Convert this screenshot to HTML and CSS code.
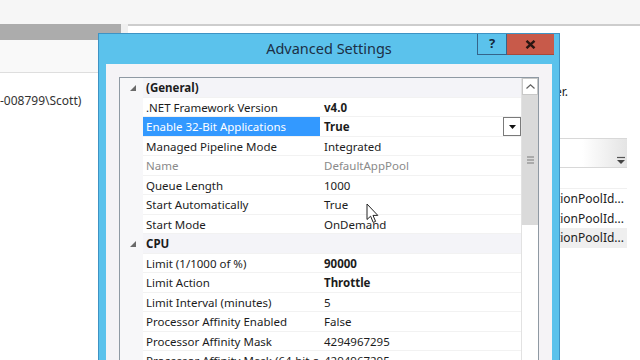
FILE: index.html
```html
<!DOCTYPE html>
<html>
  <head>
    <meta charset="UTF-8" />
    <title>Advanced Settings</title>
    <link rel="stylesheet" href="styles.css">
  </head>
  <body>
    <div class="desktop">
      <div class="topbar"></div>
      <div class="workspace">
        <div class="left-pane">
          <div class="pane-header"></div>
          <div class="pane-toolbar"></div>
          <div class="pane-body">-008799\Scott)</div>
        </div>
        <div class="right-pane">
          <p class="pane-hint">user.</p>
          <div class="pool-list">
            <div class="list-header">
              <span class="header-sort">
                <svg width="8" height="9" viewBox="0 0 8 9"><path d="M0 1.5h8" stroke="#555" stroke-width="1.2"/><path d="M0 4h8L4 8z" fill="#444"/></svg>
              </span>
            </div>
            <div class="list-body">
              <div class="list-row">ApplicationPoolId...</div>
              <div class="list-row">ApplicationPoolId...</div>
              <div class="list-row list-row-active">ApplicationPoolId...</div>
            </div>
          </div>
        </div>
      </div>
    </div>

    <!-- 对话框窗口 -->
    <div class="dialog">
      <div class="titlebar">
        <div class="title">Advanced Settings</div>
        <div class="caption-buttons">
          <div class="btn-help">?</div>
          <div class="btn-close">
            <svg width="11" height="9" viewBox="0 0 11 9"><path d="M1.5 0.8L9.5 8.2M9.5 0.8L1.5 8.2" stroke="#2a1612" stroke-width="2.4"/></svg>
          </div>
        </div>
      </div>
      <div class="dialog-body">
        <div class="grid">
          <div class="rows">
            <div class="row category">
              <span class="gutter"><svg width="6" height="6" viewBox="0 0 6 6"><path d="M6 0V6H0z" fill="#6a6a6a"/></svg></span>
              <span class="name">(General)</span><span class="value"></span>
            </div>
            <div class="row"><span class="gutter"></span><span class="name">.NET Framework Version</span><span class="value bold">v4.0</span></div>
            <div class="row selected">
              <span class="gutter"></span><span class="name">Enable 32-Bit Applications</span>
              <span class="value bold">True
                <span class="dropdown"><svg width="7" height="4" viewBox="0 0 7 4"><path d="M0 0H7L3.5 4z" fill="#111"/></svg></span>
              </span>
            </div>
            <div class="row"><span class="gutter"></span><span class="name">Managed Pipeline Mode</span><span class="value">Integrated</span></div>
            <div class="row readonly"><span class="gutter"></span><span class="name">Name</span><span class="value">DefaultAppPool</span></div>
            <div class="row"><span class="gutter"></span><span class="name">Queue Length</span><span class="value">1000</span></div>
            <div class="row"><span class="gutter"></span><span class="name">Start Automatically</span><span class="value">True</span></div>
            <div class="row"><span class="gutter"></span><span class="name">Start Mode</span><span class="value">OnDemand</span></div>
            <div class="row category">
              <span class="gutter"><svg width="6" height="6" viewBox="0 0 6 6"><path d="M6 0V6H0z" fill="#6a6a6a"/></svg></span>
              <span class="name">CPU</span><span class="value"></span>
            </div>
            <div class="row"><span class="gutter"></span><span class="name">Limit (1/1000 of %)</span><span class="value bold">90000</span></div>
            <div class="row"><span class="gutter"></span><span class="name">Limit Action</span><span class="value bold">Throttle</span></div>
            <div class="row"><span class="gutter"></span><span class="name">Limit Interval (minutes)</span><span class="value">5</span></div>
            <div class="row"><span class="gutter"></span><span class="name">Processor Affinity Enabled</span><span class="value">False</span></div>
            <div class="row"><span class="gutter"></span><span class="name">Processor Affinity Mask</span><span class="value">4294967295</span></div>
            <div class="row"><span class="gutter"></span><span class="name">Processor Affinity Mask (64-bit o</span><span class="value">4294967295</span></div>
          </div>
          <div class="scrollbar">
            <div class="scroll-up"><svg width="9" height="5" viewBox="0 0 9 5"><path d="M0.5 4.5L4.5 0.8L8.5 4.5" fill="none" stroke="#606060" stroke-width="1.2"/></svg></div>
            <div class="scroll-thumb"><svg width="7" height="8" viewBox="0 0 7 8"><path d="M0 1h7M0 4h7M0 7h7" stroke="#7a7a7a" stroke-width="1.2"/></svg></div>
            <div class="scroll-track"></div>
          </div>
        </div>
      </div>
    </div>

    <svg class="cursor" width="13" height="21" viewBox="0 0 13 21"><path d="M1 1V16.5L4.6 13.2L7.2 19.4L9.6 18.4L7 12.4H11.8Z" fill="#fff" stroke="#222" stroke-width="1"/></svg>
  </body>
</html>
```

FILE: styles.css
```css
body {
  margin: 0;
  width: 640px;
  height: 360px;
  overflow: hidden;
  position: relative;
  font-family: "Noto Sans", "Open Sans", sans-serif;
  font-size: 11.5px;
  color: #1c1c1c;
  background-color: #ffffff;
}
.desktop {
  display: flex;
  flex-direction: column;
  height: 360px;
}
.topbar {
  height: 24px;
  background-color: #f6f6f6;
}
.workspace {
  flex: 1;
  display: flex;
  gap: 7px;
  background-color: #f0f0f0;
}
.left-pane {
  width: 121px;
  display: flex;
  flex-direction: column;
  background-color: #ffffff;
}
.pane-header {
  height: 16px;
  background-color: #acacac;
}
.pane-toolbar {
  height: 32px;
  background-color: #f9f9f9;
  border-bottom: 1px solid #dedede;
}
.pane-body {
  flex: 1;
  padding-top: 20px;
  line-height: 16px;
  font-size: 12px;
  color: #333333;
  white-space: nowrap;
}
.right-pane {
  flex: 1;
  background-color: #ffffff;
  border-top: 2px solid #cdcdcd;
}
.pane-hint {
  margin: 58px 0 0;
  width: 440px;
  line-height: 16px;
  font-size: 12px;
  text-align: right;
  white-space: nowrap;
  color: #222222;
}
.pool-list {
  width: 300px;
  margin: 38px 0 0 199px;
}
.list-header {
  height: 28px;
  border: 1px solid #d8d8d8;
  border-right: none;
  background: linear-gradient(to right, #ffffff 85%, #e4e4e4);
  display: flex;
  justify-content: flex-end;
  align-items: flex-end;
}
.header-sort {
  display: flex;
  padding: 0 2px 2px 0;
}
.list-body {
  margin-top: 20px;
  border-top: 1px solid #f0f0f0;
}
.list-row {
  height: 19.5px;
  line-height: 19.5px;
  font-size: 12px;
  text-align: right;
  padding-right: 3px;
  color: #222222;
}
.list-row-active {
  background-color: #efefef;
}

/* 对话框 */
.dialog {
  position: absolute;
  left: 98px;
  top: 33px;
  width: 462px;
  height: 340px;
  box-sizing: border-box;
  border: 1px solid #3e93c4;
  background-color: #5bc2ec;
  padding: 0 7px;
  display: flex;
  flex-direction: column;
}
.titlebar {
  height: 30px;
  margin: 0 -7px;
  padding-right: 5px;
  display: flex;
  align-items: flex-start;
}
.title {
  flex: 1;
  padding-left: 82px;
  text-align: center;
  line-height: 29px;
  font-size: 14.5px;
  color: #1b2f45;
}
.caption-buttons {
  display: flex;
}
.btn-help {
  width: 30px;
  height: 21px;
  box-sizing: border-box;
  border: 1px solid #35648a;
  border-top: none;
  text-align: center;
  font-weight: bold;
  font-size: 13px;
  line-height: 18px;
  color: #14283c;
}
.btn-close {
  width: 47px;
  height: 21px;
  box-sizing: border-box;
  background-color: #c85a4a;
  border-bottom: 1px solid #a8483b;
  display: flex;
  align-items: center;
  justify-content: center;
}
.dialog-body {
  flex: 1;
  background-color: #f5f3f6;
  padding: 13px 13px 0;
  display: flex;
}
.grid {
  flex: 1;
  display: flex;
  border: 1px solid #8f99a3;
  background-color: #ffffff;
}
.rows {
  flex: 1;
}
.row {
  display: flex;
  height: 19.5px;
  line-height: 19.5px;
  white-space: nowrap;
}
.gutter {
  width: 23px;
  flex: none;
  background-color: #f7f7f9;
  display: flex;
  align-items: center;
  justify-content: center;
  padding-left: 2px;
  box-sizing: border-box;
}
.name {
  width: 177px;
  flex: none;
  padding-left: 3px;
  box-sizing: border-box;
  overflow: hidden;
  border-bottom: 1px solid #f2f2f2;
}
.value {
  flex: 1;
  display: flex;
  padding-left: 4px;
  overflow: hidden;
  border-bottom: 1px solid #f2f2f2;
}
.bold {
  font-weight: bold;
}
.category .name {
  font-weight: bold;
  background-color: #f4f4f8;
}
.category .value {
  background-color: #f4f4f8;
}
.selected .name {
  background-color: #3399ff;
  color: #ffffff;
}
.readonly .name,
.readonly .value {
  color: #8a8a8a;
}
.dropdown {
  margin-left: auto;
  width: 18px;
  height: 19px;
  box-sizing: border-box;
  border: 1px solid #7a7a7a;
  background-color: #ffffff;
  display: flex;
  align-items: center;
  justify-content: center;
}
.scrollbar {
  width: 17px;
  display: flex;
  flex-direction: column;
  border-left: 1px solid #e2e2e2;
  box-sizing: border-box;
}
.scroll-up {
  height: 17px;
  box-sizing: border-box;
  border: 1px solid #c8c8c8;
  display: flex;
  align-items: center;
  justify-content: center;
}
.scroll-thumb {
  height: 130px;
  background-color: #dadada;
  display: flex;
  align-items: center;
  justify-content: center;
}
.scroll-track {
  flex: 1;
  background-color: #ffffff;
}
.cursor {
  position: absolute;
  left: 366px;
  top: 203px;
}
```
